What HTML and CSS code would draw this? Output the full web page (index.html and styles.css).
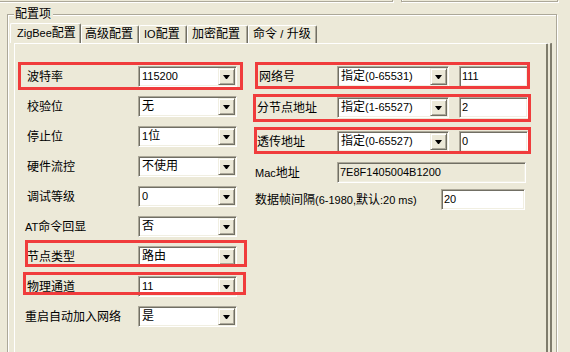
FILE: index.html
```html
<!DOCTYPE html>
<html>
<head>
<meta charset="utf-8">
<link rel="stylesheet" href="styles.css">
</head>
<body>
<div class="topboxes"><div class="tb tb1"></div><div class="tb tb2"></div></div>
<div class="group">
  <div class="legend">配置项</div>
  <div class="tabs">
    <div class="tab sel"><span class="en">ZigBee</span>配置</div>
    <div class="tab">高级配置</div>
    <div class="tab"><span class="en">IO</span>配置</div>
    <div class="tab">加密配置</div>
    <div class="tab">命令 <span class="en">/</span> 升级</div>
  </div>
  <div class="page">
    <div class="col left">
      <div class="row"><span class="lbl">波特率</span><div class="combo"><span class="val en">115200</span><span class="btn"><i></i></span></div></div>
      <div class="row"><span class="lbl">校验位</span><div class="combo"><span class="val">无</span><span class="btn"><i></i></span></div></div>
      <div class="row"><span class="lbl">停止位</span><div class="combo"><span class="val"><span class="en">1</span>位</span><span class="btn"><i></i></span></div></div>
      <div class="row"><span class="lbl">硬件流控</span><div class="combo"><span class="val">不使用</span><span class="btn"><i></i></span></div></div>
      <div class="row"><span class="lbl">调试等级</span><div class="combo"><span class="val en">0</span><span class="btn"><i></i></span></div></div>
      <div class="row"><span class="lbl l2"><span class="en">AT</span>命令回显</span><div class="combo"><span class="val">否</span><span class="btn"><i></i></span></div></div>
      <div class="row"><span class="lbl">节点类型</span><div class="combo"><span class="val">路由</span><span class="btn"><i></i></span></div></div>
      <div class="row"><span class="lbl">物理通道</span><div class="combo"><span class="val en">11</span><span class="btn"><i></i></span></div></div>
      <div class="row"><span class="lbl l2">重启自动加入网络</span><div class="combo"><span class="val">是</span><span class="btn"><i></i></span></div></div>
    </div>
    <div class="col right">
      <div class="rrow r1"><span class="rlbl p4">网络号</span><div class="combo wide"><span class="val">指定<span class="en">(0-65531)</span></span><span class="btn"><i></i></span></div><div class="edit short"><span class="val en">111</span></div></div>
      <div class="rrow r2"><span class="rlbl p2">分节点地址</span><div class="combo wide"><span class="val">指定<span class="en">(1-65527)</span></span><span class="btn"><i></i></span></div><div class="edit short"><span class="val en">2</span></div></div>
      <div class="rrow r3"><span class="rlbl p2">透传地址</span><div class="combo wide"><span class="val">指定<span class="en">(0-65527)</span></span><span class="btn"><i></i></span></div><div class="edit short"><span class="val en">0</span></div></div>
      <div class="rrow r4"><span class="rlbl"><span class="en">Mac</span>地址</span><div class="edit mac"><span class="val en">7E8F1405004B1200</span></div></div>
      <div class="rrow r5"><span class="dlbl">数据帧间隔<span class="en">(6-1980,</span>默认<span class="en">:20 ms)</span></span><div class="edit data"><span class="val en">20</span></div></div>
    </div>
  </div>
</div>
<div class="mark m1"></div>
<div class="mark m2"></div>
<div class="mark m3"></div>
<div class="mark m4"></div>
<div class="mark m5"></div>
<div class="mark m6"></div>
</body>
</html>
```

FILE: styles.css
```css
* { box-sizing: border-box; margin: 0; padding: 0; }
html, body { width: 570px; height: 352px; overflow: hidden; }
body {
  position: relative;
  background: #ece9d8;
  font-family: "Liberation Sans", "Noto Sans CJK SC", sans-serif;
  font-size: 12px;
  line-height: 14px;
  color: #000;
}
.en { font-size: 11px; }

/* partially visible boxes above */
.topboxes { display: flex; height: 3px; }
.tb {
  height: 2px;
  border: 1px solid #aca899;
  border-top: 0;
  box-shadow: 1px 1px 0 #fff;
}
.tb1 { margin-left: -10px; width: 403px; }
.tb2 { margin-left: 8px; width: 157px; box-shadow: inset 1px 0 0 #fff, 1px 1px 0 #fff; }

/* group box */
.group {
  position: relative;
  margin-top: 11px;
  margin-left: 7px;
  width: 550px;
  height: 360px;
  border: 1px solid #aca899;
  box-shadow: inset 1px 1px 0 #fff, 1px 1px 0 #fff;
  padding-top: 8px;
}
.legend {
  position: absolute;
  top: -8px;
  left: 6px;
  padding: 0 2px 0 1px;
  background: #ece9d8;
  line-height: 14px;
}

/* tabs */
.tabs { display: flex; align-items: flex-end; height: 20px; margin-left: 2px; }
.tab {
  height: 18px;
  line-height: 17px;
  padding-left: 4px;
  white-space: nowrap;
  border-top: 1px solid #fff;
  border-left: 1px solid #fff;
  border-right: 1px solid #716f64;
  box-shadow: inset -1px 0 0 #aca899;
  border-radius: 2px 2px 0 0;
}
.tab.sel { height: 20px; line-height: 19px; padding-left: 6px; width: 71px; }
.tab:nth-child(2) { width: 58px; padding-left: 3px; }
.tab:nth-child(3) { width: 48px; }
.tab:nth-child(4) { width: 61px; }
.tab:nth-child(5) { width: 69px; }

/* tab page */
.page {
  display: flex;
  margin-left: 6px;
  width: 538px;
  height: 330px;
  border-top: 1px solid #fff;
  border-left: 1px solid #fff;
  border-right: 6px double #7f7c6c;
  padding-top: 22px;
}

/* left column */
.left { margin-left: 7px; width: 217px; }
.row {
  display: flex;
  align-items: center;
  height: 21px;
  padding-left: 5px;
  margin-bottom: 9px;
}
.lbl { flex: 1; white-space: nowrap; }
.lbl.l2 { margin-left: -2px; }

/* controls */
.combo, .edit {
  display: flex;
  height: 21px;
  background: #fff;
  border: 1px solid;
  border-color: #aca899 #fff #fff #aca899;
  box-shadow: inset 1px 1px 0 #716f64, inset -1px -1px 0 #f1efe2;
  padding: 1px;
}
.row .combo { width: 99px; margin-right: 2px; }
.val { flex: 1; padding-left: 2px; line-height: 17px; white-space: nowrap; overflow: hidden; }
.btn {
  display: flex;
  align-items: center;
  justify-content: center;
  width: 17px;
  height: 17px;
  background: #ece9d8;
  border: 1px solid;
  border-color: #f1efe2 #716f64 #716f64 #f1efe2;
  box-shadow: inset 1px 1px 0 #fff, inset -1px -1px 0 #aca899;
}
.btn i {
  display: block;
  width: 1px;
  height: 0;
  border-left: 3px solid transparent;
  border-right: 3px solid transparent;
  border-top: 4px solid #000;
  box-sizing: content-box;
  margin-top: 1px;
}

/* right column */
.right { margin-left: 16px; width: 273px; }
.rrow { display: flex; align-items: center; height: 21px; }
.r2 { margin-top: 10px; }
.r3 { margin-top: 13px; }
.r4 { margin-top: 10px; }
.r5 { margin-top: 6px; }
.rlbl { width: 82px; white-space: nowrap; }
.rlbl.p4 { padding-left: 4px; }
.rlbl.p2 { padding-left: 2px; }
.dlbl { white-space: nowrap; }
.combo.wide { width: 112px; }
.edit .val { padding-left: 1px; }
.edit.short { width: 69px; margin-left: 10px; }
.edit.mac { width: 189px; background: #ece9d8; }
.edit.data { width: 84px; margin-left: auto; margin-right: 3px; }

/* red annotation frames drawn over the form */
.mark { position: absolute; border: 3px solid #f03c3c; }
.m1 { left: 18px; top: 62px; width: 225px; height: 28px; }
.m2 { left: 25px; top: 240px; width: 222px; height: 27px; }
.m3 { left: 23px; top: 272px; width: 223px; height: 23px; }
.m4 { left: 255px; top: 62px; width: 275px; height: 27px; }
.m5 { left: 253px; top: 94px; width: 278px; height: 28px; }
.m6 { left: 254px; top: 127px; width: 277px; height: 27px; }
```
